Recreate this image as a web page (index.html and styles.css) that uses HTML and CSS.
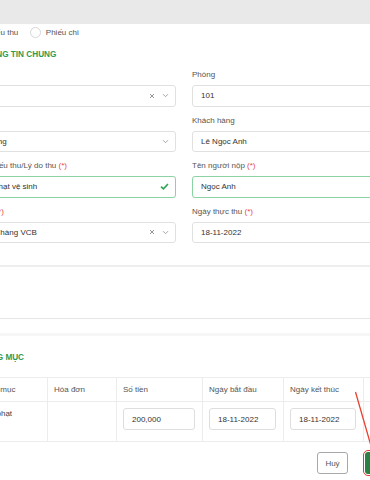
FILE: index.html
```html
<!DOCTYPE html>
<html lang="vi">
<head>
    <meta charset="UTF-8">
    <meta name="viewport" content="width=device-width, initial-scale=1.0">
    <title>Phiếu thu</title>
    <link rel="stylesheet" href="styles.css">
</head>
<body>
    <div class="page">
        <div class="modal-head"></div>

        <div class="modal-body">
            <div class="radio-row">
                <label class="radio"><span class="radio-dot on"></span>Phiếu thu</label>
                <label class="radio"><span class="radio-dot"></span>Phiếu chi</label>
            </div>

            <h2 class="section-title">THÔNG TIN CHUNG</h2>

            <div class="form-grid">
                <div class="field">
                    <label>Tòa nhà</label>
                    <div class="input">
                        <span class="val">Tòa A</span>
                        <span class="icons">
                            <svg width="6" height="6" viewBox="0 0 6 6"><path d="M1 1l4 4M5 1L1 5" stroke="#8a8a8a" stroke-width="0.9" fill="none"/></svg>
                            <svg width="7" height="5" viewBox="0 0 7 5"><path d="M1 1.2l2.5 2.5L6 1.2" stroke="#9a9a9a" stroke-width="0.9" fill="none"/></svg>
                        </span>
                    </div>
                </div>
                <div class="field">
                    <label>Phòng</label>
                    <div class="input"><span class="val">101</span></div>
                </div>

                <div class="field">
                    <label>Loại thu</label>
                    <div class="input">
                        <span class="val wide">Tiền phòng</span>
                        <span class="icons">
                            <svg width="7" height="5" viewBox="0 0 7 5"><path d="M1 1.2l2.5 2.5L6 1.2" stroke="#9a9a9a" stroke-width="0.9" fill="none"/></svg>
                        </span>
                    </div>
                </div>
                <div class="field">
                    <label>Khách hàng</label>
                    <div class="input"><span class="val">Lê Ngọc Anh</span></div>
                </div>

                <div class="field">
                    <label>Nội dung phiếu thu/Lý do thu <span class="req">(*)</span></label>
                    <div class="input valid">
                        <span class="val">Thu tiền phạt vệ sinh</span>
                        <svg width="9" height="7" viewBox="0 0 9 7"><path d="M1 3.6l2.4 2.3L8 1" stroke="#2ea654" stroke-width="1.6" fill="none"/></svg>
                    </div>
                </div>
                <div class="field">
                    <label>Tên người nộp <span class="req">(*)</span></label>
                    <div class="input valid"><span class="val">Ngọc Anh</span></div>
                </div>

                <div class="field">
                    <label>Ngân hàng <span class="req">(*)</span></label>
                    <div class="input">
                        <span class="val">Qua ngân hàng VCB</span>
                        <span class="icons">
                            <svg width="6" height="6" viewBox="0 0 6 6"><path d="M1 1l4 4M5 1L1 5" stroke="#8a8a8a" stroke-width="0.9" fill="none"/></svg>
                            <svg width="7" height="5" viewBox="0 0 7 5"><path d="M1 1.2l2.5 2.5L6 1.2" stroke="#9a9a9a" stroke-width="0.9" fill="none"/></svg>
                        </span>
                    </div>
                </div>
                <div class="field">
                    <label>Ngày thực thu <span class="req">(*)</span></label>
                    <div class="input"><span class="val">18-11-2022</span></div>
                </div>
            </div>

            <div class="divider"></div>
            <div class="note-box"></div>
            <div class="band"></div>

            <h2 class="section-title second">HẠNG MỤC</h2>

            <table class="items">
                <colgroup>
                    <col style="width:75px">
                    <col style="width:69px">
                    <col style="width:86px">
                    <col style="width:81px">
                    <col style="width:80px">
                    <col style="width:60px">
                </colgroup>
                <thead>
                    <tr>
                        <th>Hạng mục</th>
                        <th>Hóa đơn</th>
                        <th>Số tiền</th>
                        <th>Ngày bắt đầu</th>
                        <th>Ngày kết thúc</th>
                        <th>Số lượng</th>
                    </tr>
                </thead>
                <tbody>
                    <tr>
                        <td class="name">Tiền phạt</td>
                        <td></td>
                        <td><div class="cell-input">200,000</div></td>
                        <td><div class="cell-input">18-11-2022</div></td>
                        <td><div class="cell-input">18-11-2022</div></td>
                        <td><div class="cell-input marked">1</div></td>
                    </tr>
                </tbody>
            </table>

            <div class="footer">
                <button class="btn btn-cancel">Huỷ</button>
                <button class="btn btn-save">Lưu</button>
            </div>
        </div>

        <svg class="mark" width="370" height="480" viewBox="0 0 370 480">
            <path d="M355.5 392L370.5 444" stroke="#e8412f" stroke-width="1.3" fill="none"/>
        </svg>
    </div>
</body>
</html>
```

FILE: styles.css
```css
body {
    margin: 0;
    font-family: "Liberation Sans", Arial, sans-serif;
    font-size: 8px;
    color: #333;
    background: #fff;
    overflow: hidden;
}

.page {
    position: relative;
    width: 370px;
    height: 480px;
    overflow: hidden;
}

.modal-head {
    height: 24px;
    background: #e9e9e9;
}

.modal-body {
    margin-left: -46px;
    width: 460px;
}

.radio-row {
    display: flex;
    align-items: center;
    gap: 12px;
    height: 11px;
    margin: 3px 0 0 15px;
}

.radio {
    display: flex;
    align-items: center;
    gap: 4.5px;
    color: #555;
}

.radio-dot {
    width: 11px;
    height: 11px;
    box-sizing: border-box;
    border: 1px solid #d6d6d6;
    border-radius: 50%;
}

.radio-dot.on {
    border: 3px solid #2e9b50;
}

.section-title {
    margin: 12px 0 0 25px;
    font-size: 8.2px;
    line-height: 10px;
    font-weight: bold;
    color: #2f9a50;
}

.section-title.second {
    margin-top: 17px;
}

.form-grid {
    display: grid;
    grid-template-columns: 222px 222px;
    column-gap: 16px;
    row-gap: 9px;
    margin-top: 10px;
}

.field label {
    display: block;
    line-height: 10px;
    margin-bottom: 5px;
    color: #555;
    white-space: nowrap;
}

.req {
    color: #e5484d;
}

.input {
    display: flex;
    align-items: center;
    height: 21.5px;
    box-sizing: border-box;
    padding: 0 6px 0 8px;
    border: 1px solid #e1e1e1;
    border-radius: 3px;
    color: #333;
}

.input.valid {
    border-color: #8bd3a3;
}

.input .val {
    flex: 1;
    white-space: nowrap;
}

.input .val.wide {
    padding-left: 4px;
}

.icons {
    display: flex;
    align-items: center;
    gap: 7px;
}

.divider {
    height: 2px;
    margin-top: 22px;
    background: #eeeeee;
}

.note-box {
    height: 51px;
    border-bottom: 1px solid #e6e6e6;
}

.band {
    height: 3px;
    margin-top: 14px;
    background: #f6f6f6;
}

.items {
    margin: 14px 0 0 17.5px;
    border-collapse: collapse;
    table-layout: fixed;
    width: 451px;
}

.items th,
.items td {
    border: 1px solid #ececec;
    text-align: left;
}

.items th {
    height: 24px;
    box-sizing: border-box;
    padding: 0 6.5px;
    font-weight: normal;
    color: #555;
    white-space: nowrap;
}

.items td {
    height: 40px;
    box-sizing: border-box;
    padding: 6px 6.5px 11px;
    vertical-align: top;
    color: #444;
}

.items td.name {
    line-height: 10px;
    padding-top: 7px;
}

.cell-input {
    display: flex;
    align-items: center;
    height: 22px;
    box-sizing: border-box;
    padding: 0 9px 0 8px;
    border: 1px solid #dedede;
    border-radius: 3px;
    color: #333;
}

.cell-input.marked {
    border-color: #f2aaaa;
    background: #fff6f6;
}

.footer {
    display: flex;
    justify-content: flex-end;
    gap: 17px;
    margin-top: 10px;
    padding-right: 5px;
}

.btn {
    height: 22px;
    box-sizing: border-box;
    border-radius: 3px;
    font-family: inherit;
    font-size: 8px;
    padding: 0;
}

.btn-cancel {
    width: 31px;
    border: 1px solid #a8a8a8;
    background: #fff;
    color: #555;
}

.btn-save {
    width: 44px;
    border: none;
    background: #2b8046;
    color: #fff;
    outline: 1.5px solid #e53b2f;
    outline-offset: 1px;
}

.mark {
    position: absolute;
    left: 0;
    top: 0;
    pointer-events: none;
}
```
